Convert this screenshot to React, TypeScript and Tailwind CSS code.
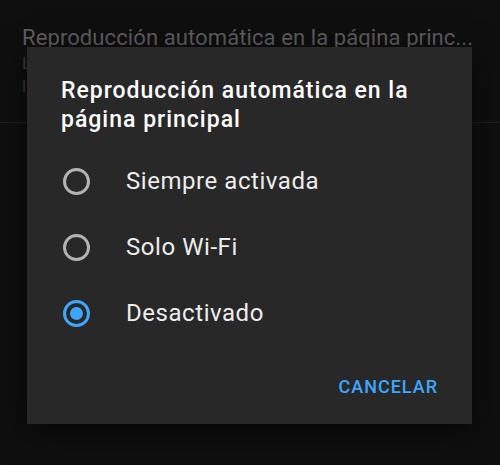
import { useState } from "react";

const options = ["Siempre activada", "Solo Wi-Fi", "Desactivado"];

function Radio({ checked }: { checked: boolean }) {
  return (
    <span
      className={`flex h-[27px] w-[27px] shrink-0 items-center justify-center rounded-full border-[3px] ${
        checked ? "border-[#3ea6ff]" : "border-[#b3b3b3]"
      }`}
    >
      {checked && <span className="h-[13px] w-[13px] rounded-full bg-[#3ea6ff]" />}
    </span>
  );
}

export default function App() {
  const [selected, setSelected] = useState(2);

  return (
    <div className="relative h-[465px] w-[500px] overflow-hidden bg-[#0f0f0f] font-['Roboto',sans-serif]">
      {/* settings page behind the dialog */}
      <div className="h-[123px] border-b border-[#1f1f1f] px-[22px] pt-[24px]">
        <p className="whitespace-nowrap text-[22px] leading-[28px] tracking-[0.1px] text-[#5f5f5f]">
          Reproducción automática en la página princ...
        </p>
        <p className="text-[17px] leading-[23px] text-[#3c3c3c]">Lorem</p>
        <p className="text-[17px] leading-[23px] text-[#3c3c3c]">lorem</p>
      </div>

      <div className="absolute left-[27px] top-[47px] flex h-[377px] w-[445px] flex-col bg-[#282828] shadow-[0_8px_30px_rgba(0,0,0,0.6)]">
        <h2 className="pl-[34px] pr-[30px] pt-[29px] text-[23px] font-medium leading-[29px] tracking-[1px] text-white">
          Reproducción automática en la página principal
        </h2>
        <div className="mt-[14px] flex flex-col">
          {options.map((label, i) => (
            <button
              key={label}
              onClick={() => setSelected(i)}
              className="flex h-[66px] items-center gap-[36px] pl-[36px] text-left"
            >
              <Radio checked={selected === i} />
              <span className="text-[24px] tracking-[0.55px] text-[#ececec]">{label}</span>
            </button>
          ))}
        </div>
        <div className="flex justify-end pr-[34px] pt-[27px]">
          <button className="text-[18px] font-medium tracking-[1px] text-[#3ea6ff]">CANCELAR</button>
        </div>
      </div>
    </div>
  );
}
